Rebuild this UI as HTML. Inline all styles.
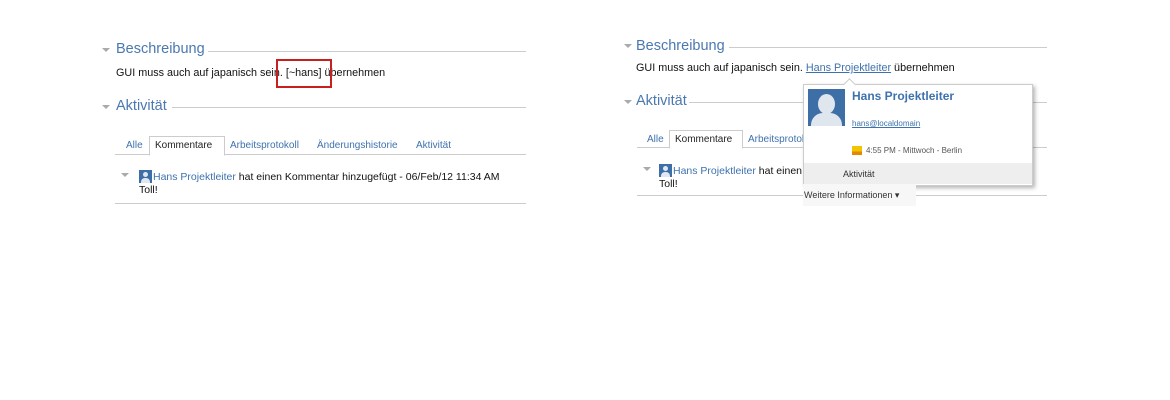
<!DOCTYPE html>
<html><head><meta charset="utf-8"><style>
body{margin:0;width:1170px;height:400px;background:#fff;font-family:"Liberation Sans",sans-serif;position:relative;overflow:hidden}
.a{position:absolute;white-space:nowrap}
.h{font-size:14.5px;color:#4a78b0}
.t{font-size:10.8px;color:#111}
.c{font-size:10.5px;color:#111}
.l{color:#3e72ad}
.line{position:absolute;height:1px;background:#ccc}
.tri{position:absolute;width:0;height:0;border-left:4px solid transparent;border-right:4px solid transparent;border-top:4px solid #aaa}
.tab{font-size:10px;color:#3e72ad}
.ic{position:absolute;width:13px;height:13px;background:#3d6fa6}
.ic:after{content:"";position:absolute;left:4px;top:2px;width:5px;height:5px;border-radius:50%;background:#dfe8f2}
.ic:before{content:"";position:absolute;left:2px;top:8px;width:9px;height:5px;border-radius:4px 4px 0 0;background:#dfe8f2}
</style></head><body>
<!-- left -->
<div class="tri" style="left:102px;top:48px"></div>
<div class="a h" style="left:116px;top:41px">Beschreibung</div>
<div class="line" style="left:208px;top:51px;width:318px"></div>
<div class="a t" style="left:116px;top:67px">GUI muss auch auf japanisch sein. [~hans] übernehmen</div>
<div class="a" style="left:276px;top:59px;width:52px;height:25px;border:2px solid #c8201e"></div>
<div class="tri" style="left:102px;top:105px"></div>
<div class="a h" style="left:116px;top:98px">Aktivität</div>
<div class="line" style="left:172px;top:107px;width:354px"></div>
<div class="line" style="left:115px;top:154px;width:411px"></div>
<div class="a" style="left:149px;top:136px;width:74px;height:18px;border:1px solid #ccc;border-bottom:1px solid #fff;background:#fff"></div>
<div class="a tab" style="left:126px;top:140px">Alle</div>
<div class="a tab" style="left:155px;top:140px;color:#222">Kommentare</div>
<div class="a tab" style="left:230px;top:140px">Arbeitsprotokoll</div>
<div class="a tab" style="left:317px;top:140px">Änderungshistorie</div>
<div class="a tab" style="left:416px;top:140px">Aktivität</div>
<div class="tri" style="left:121px;top:173px"></div>
<div class="ic" style="left:139px;top:170px"></div>
<div class="a c" style="left:153px;top:171px"><span class="l">Hans Projektleiter</span> hat einen Kommentar hinzugefügt - 06/Feb/12 11:34 AM</div>
<div class="a c" style="left:139px;top:184px">Toll!</div>
<div class="line" style="left:115px;top:203px;width:411px"></div>
<!-- right -->
<div class="tri" style="left:624px;top:44px"></div>
<div class="a h" style="left:636px;top:38px">Beschreibung</div>
<div class="line" style="left:729px;top:47px;width:318px"></div>
<div class="a t" style="left:636px;top:62px">GUI muss auch auf japanisch sein. <span class="l" style="text-decoration:underline">Hans Projektleiter</span> übernehmen</div>
<div class="tri" style="left:624px;top:100px"></div>
<div class="a h" style="left:636px;top:93px">Aktivität</div>
<div class="line" style="left:689px;top:102px;width:358px"></div>
<div class="line" style="left:637px;top:147px;width:410px"></div>
<div class="a" style="left:669px;top:130px;width:72px;height:17px;border:1px solid #ccc;border-bottom:1px solid #fff;background:#fff"></div>
<div class="a tab" style="left:647px;top:134px">Alle</div>
<div class="a tab" style="left:675px;top:134px;color:#222">Kommentare</div>
<div class="a tab" style="left:748px;top:134px">Arbeitsprotokoll</div>
<div class="tri" style="left:643px;top:167px"></div>
<div class="ic" style="left:659px;top:164px"></div>
<div class="a c" style="left:673px;top:165px"><span class="l">Hans Projektleiter</span> hat einen</div>
<div class="a c" style="left:659px;top:178px">Toll!</div>
<div class="line" style="left:637px;top:195px;width:410px"></div>
<!-- popup -->
<div class="a" style="left:803px;top:84px;width:228px;height:100px;border:1px solid #ccc;background:#fff;box-shadow:2px 2px 4px rgba(0,0,0,.3)"></div>
<div class="a" style="left:845px;top:80px;width:8px;height:8px;background:#fff;border-left:1px solid #ccc;border-top:1px solid #ccc;transform:rotate(45deg)"></div>
<div class="a" style="left:804px;top:163px;width:228px;height:21px;background:#eee"></div>
<div class="a" style="left:808px;top:89px;width:37px;height:37px;background:#3d6fa6;overflow:hidden">
 <div style="position:absolute;left:10px;top:5px;width:17px;height:20px;border-radius:50%;background:#dfe6ee"></div>
 <div style="position:absolute;left:3px;top:24px;width:31px;height:16px;border-radius:12px 12px 0 0;background:#dfe6ee"></div>
</div>
<div class="a" style="left:852px;top:89px;font-size:12px;font-weight:bold;color:#3e72ad">Hans Projektleiter</div>
<div class="a" style="left:852px;top:119px;font-size:8px;color:#3e72ad;text-decoration:underline">hans@localdomain</div>
<div class="a" style="left:852px;top:146px;width:10px;height:9px;background:linear-gradient(#f5c400 60%,#e08a00 60%)"></div>
<div class="a" style="left:866px;top:146px;font-size:8px;color:#555">4:55 PM - Mittwoch - Berlin</div>
<div class="a" style="left:843px;top:169px;font-size:9px;color:#333">Aktivität</div>
<div class="a" style="left:803px;top:184px;width:113px;height:22px;background:#f7f7f7"></div>
<div class="a" style="left:804px;top:190px;font-size:9px;color:#333">Weitere Informationen ▾</div>
</body></html>
